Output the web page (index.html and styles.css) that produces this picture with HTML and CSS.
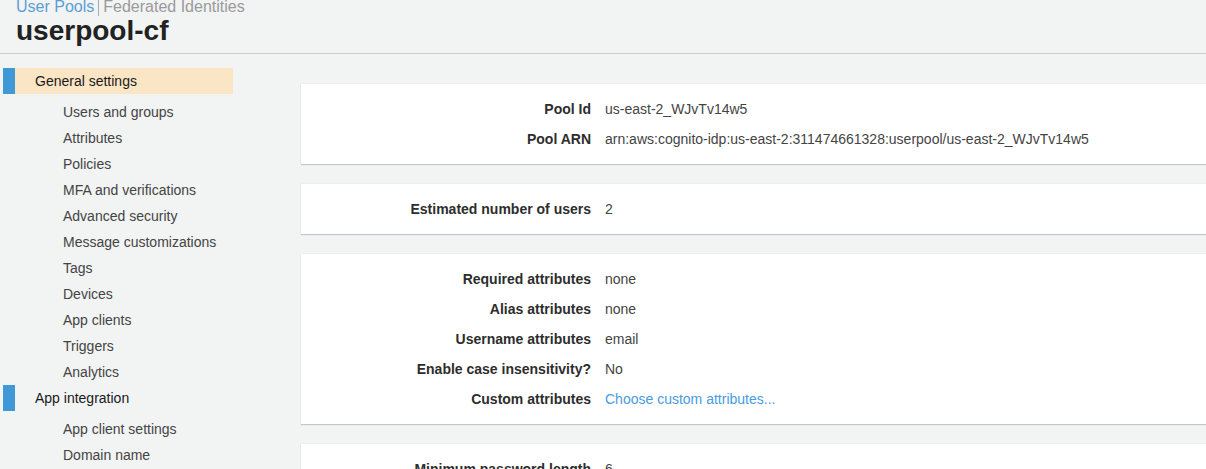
FILE: index.html
```html
<!DOCTYPE html>
<html>
<head>
<meta charset="utf-8">
<link rel="stylesheet" href="styles.css">
</head>
<body>
<header class="page-header">
  <nav class="crumbs"><a class="crumb-link">User Pools</a><span class="crumb-sep"></span><span class="crumb-muted">Federated Identities</span></nav>
  <h1 class="title">userpool-cf</h1>
</header>
<div class="main">
  <aside class="sidebar">
    <div class="group-head active"><span class="bar"></span><span class="group-label">General settings</span></div>
    <ul class="sub">
      <li>Users and groups</li>
      <li>Attributes</li>
      <li>Policies</li>
      <li>MFA and verifications</li>
      <li>Advanced security</li>
      <li>Message customizations</li>
      <li>Tags</li>
      <li>Devices</li>
      <li>App clients</li>
      <li>Triggers</li>
      <li>Analytics</li>
    </ul>
    <div class="group-head"><span class="bar"></span><span class="group-label">App integration</span></div>
    <ul class="sub">
      <li>App client settings</li>
      <li>Domain name</li>
    </ul>
  </aside>
  <section class="content">
    <div class="card">
      <div class="row"><div class="label">Pool Id</div><div class="value">us-east-2_WJvTv14w5</div></div>
      <div class="row"><div class="label">Pool ARN</div><div class="value">arn:aws:cognito-idp:us-east-2:311474661328:userpool/us-east-2_WJvTv14w5</div></div>
    </div>
    <div class="card">
      <div class="row"><div class="label">Estimated number of users</div><div class="value">2</div></div>
    </div>
    <div class="card">
      <div class="row"><div class="label">Required attributes</div><div class="value">none</div></div>
      <div class="row"><div class="label">Alias attributes</div><div class="value">none</div></div>
      <div class="row"><div class="label">Username attributes</div><div class="value">email</div></div>
      <div class="row"><div class="label">Enable case insensitivity?</div><div class="value">No</div></div>
      <div class="row"><div class="label">Custom attributes</div><div class="value"><a class="link">Choose custom attributes...</a></div></div>
    </div>
    <div class="card">
      <div class="row"><div class="label">Minimum password length</div><div class="value">6</div></div>
    </div>
  </section>
</div>
</body>
</html>
```
FILE: styles.css
```css
* { box-sizing: border-box; }
html, body { margin: 0; padding: 0; }
body {
  width: 1206px;
  height: 469px;
  overflow: hidden;
  background: #f2f3f3;
  font-family: "Liberation Sans", Arial, sans-serif;
  color: #444;
  font-size: 14px;
}
.page-header {
  border-bottom: 1px solid #cccccc;
  height: 54px;
  padding-left: 16px;
  overflow: hidden;
}
.crumbs {
  font-size: 16px;
  line-height: 18px;
  margin-top: -2px;
  display: flex;
  align-items: center;
  white-space: nowrap;
}
.crumb-link { color: #5a9fd6; }
.crumb-sep {
  display: inline-block;
  width: 1px;
  height: 18px;
  background: #aaa;
  margin: 0 4px 0 4px;
}
.crumb-muted { color: #9a9a9a; }
.title {
  margin: 0;
  font-size: 28px;
  line-height: 32px;
  font-weight: bold;
  color: #222;
  margin-top: -1px;
}
.main {
  display: flex;
}
.sidebar {
  width: 233px;
  flex: none;
  padding-top: 14px;
  padding-left: 3px;
}
.group-head {
  display: flex;
  height: 26px;
  align-items: center;
  margin-bottom: 5px;
}
.group-head .bar {
  width: 12px;
  height: 26px;
  background: #4198d7;
  flex: none;
}
.group-head .group-label {
  flex: 1;
  height: 26px;
  line-height: 26px;
  padding-left: 20px;
  color: #1a1a1a;
}
.group-head.active .group-label { background: #fae5c5; }
.sub {
  list-style: none;
  margin: 0;
  padding: 0 0 0 60px;
}
.sub li {
  height: 26px;
  line-height: 26px;
  color: #444;
  white-space: nowrap;
}
.content {
  flex: 1;
  padding: 30px 0 0 68px;
  margin-right: -20px;
}
.card {
  background: #fff;
  padding: 10px 0;
  margin-bottom: 20px;
  box-shadow: 0 1px 1px 0 rgba(0, 28, 36, 0.18), 0 0 1px 0 rgba(0, 28, 36, 0.12);
}
.row {
  display: flex;
  height: 30px;
  align-items: center;
}
.label {
  width: 290px;
  flex: none;
  text-align: right;
  font-weight: bold;
  color: #2d2d2d;
  white-space: nowrap;
}
.value {
  padding-left: 14px;
  color: #444;
  white-space: nowrap;
}
.link { color: #4a9be0; }
```
